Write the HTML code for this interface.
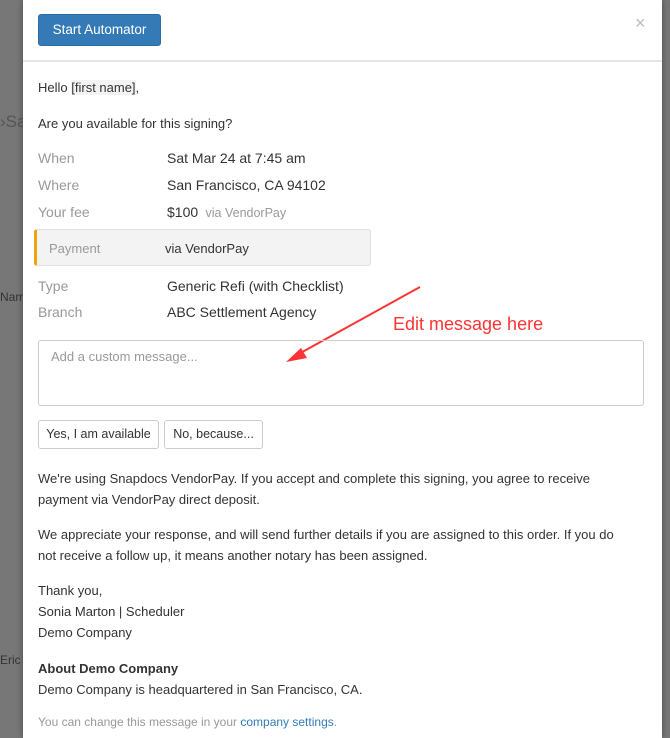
<!DOCTYPE html>
<html><head><style>
body{margin:0;width:670px;height:738px;overflow:hidden;background:#777;font-family:"Liberation Sans",sans-serif;font-size:13px;color:#333;position:relative}
.m{position:absolute;left:23px;top:0;width:639px;height:738px;background:#fff;box-shadow:0 0 6px rgba(0,0,0,.4)}
.a{position:absolute;white-space:nowrap}
.l{color:#999;font-size:14px}
.v{font-size:14px;color:#333}
.btn{position:absolute;border:1px solid #ccc;border-radius:3px;background:#fff;font-size:12.5px;text-align:center;line-height:27px;height:27px}
</style></head><body>
<div class="a" style="left:0;top:112px;color:#555;font-size:17px">&#8250;Sa</div>
<div class="a" style="left:0;top:290px;color:#333;font-size:12px">Nam</div>
<div class="a" style="left:0;top:653px;color:#333;font-size:12px">Eric</div>
<div class="m">
 <div class="btn" style="left:15px;top:14px;width:121px;height:30px;line-height:30px;background:#337ab7;border-color:#2e6da4;color:#fff;font-size:13.5px">Start Automator</div>
 <div class="a" style="left:612px;top:13px;color:#bbb;font-size:18px">×</div>
 <div style="position:absolute;left:0;top:60px;width:639px;height:2px;background:#e5e5e5"></div>
 <div class="a" style="left:15px;top:80px">Hello <span style="background:#f3f3f3">[first name]</span>,</div>
 <div class="a" style="left:15px;top:116px">Are you available for this signing?</div>
 <div class="a l" style="left:15px;top:150px">When</div><div class="a v" style="left:144px;top:150px">Sat Mar 24 at 7:45 am</div>
 <div class="a l" style="left:15px;top:177px">Where</div><div class="a v" style="left:144px;top:177px">San Francisco, CA 94102</div>
 <div class="a l" style="left:15px;top:204px">Your fee</div><div class="a v" style="left:144px;top:204px">$100 <span style="color:#999;font-size:12.5px">&nbsp;via VendorPay</span></div>
 <div style="position:absolute;left:11px;top:229px;width:337px;height:37px;background:#f3f3f3;border:1px solid #e0e0e0;border-left:3px solid #f0a30a;border-radius:3px;box-sizing:border-box"></div>
 <div class="a" style="left:26px;top:241px;color:#999">Payment</div>
 <div class="a" style="left:142px;top:241px">via VendorPay</div>
 <div class="a l" style="left:15px;top:278px">Type</div><div class="a v" style="left:144px;top:278px">Generic Refi (with Checklist)</div>
 <div class="a l" style="left:15px;top:304px">Branch</div><div class="a v" style="left:144px;top:304px">ABC Settlement Agency</div>
 <div class="a" style="left:370px;top:314px;color:#f33;font-size:18px">Edit message here</div>
 <svg style="position:absolute;left:0;top:0" width="639" height="400"><line x1="397" y1="287" x2="272" y2="356" stroke="#f33" stroke-width="2"/><polygon points="263,362 278,348 284,358" fill="#f33"/></svg>
 <div style="position:absolute;left:15px;top:340px;width:606px;height:66px;border:1px solid #ccc;border-radius:3px;box-sizing:border-box"></div>
 <div class="a" style="left:28px;top:349px;color:#999">Add a custom message...</div>
 <div class="btn" style="left:15px;top:420px;width:119px">Yes, I am available</div>
 <div class="btn" style="left:141px;top:420px;width:97px">No, because...</div>
 <div class="a" style="left:15px;top:468px;line-height:21px">We're using Snapdocs VendorPay. If you accept and complete this signing, you agree to receive<br>payment via VendorPay direct deposit.</div>
 <div class="a" style="left:15px;top:524px;line-height:21px">We appreciate your response, and will send further details if you are assigned to this order. If you do<br>not receive a follow up, it means another notary has been assigned.</div>
 <div class="a" style="left:15px;top:580px;line-height:21px">Thank you,<br>Sonia Marton | Scheduler<br>Demo Company</div>
 <div class="a" style="left:15px;top:658px;line-height:21px"><b>About Demo Company</b><br>Demo Company is headquartered in San Francisco, CA.</div>
 <div class="a" style="left:15px;top:715px;color:#999;font-size:12px">You can change this message in your <span style="color:#337ab7">company settings</span>.</div>
</div>
</body></html>
